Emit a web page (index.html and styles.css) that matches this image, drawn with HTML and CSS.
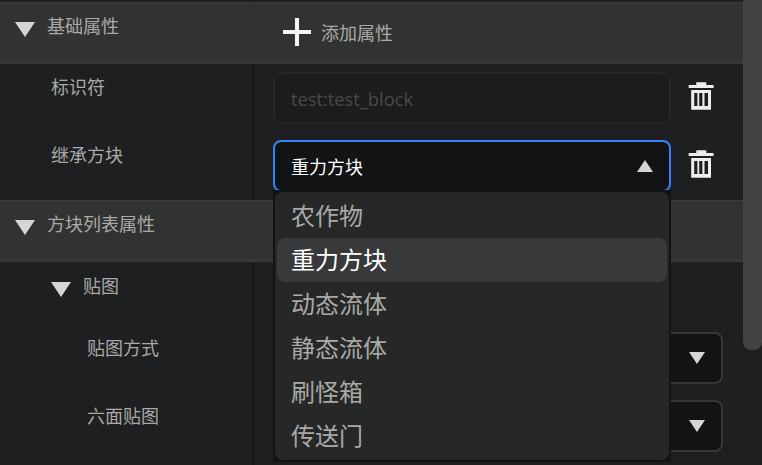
FILE: index.html
```html
<!DOCTYPE html>
<html lang="zh-CN">
<head>
<meta charset="utf-8">
<title>属性</title>
<link rel="stylesheet" href="styles.css">
</head>
<body>
<svg class="defs" aria-hidden="true">
  <symbol id="down" viewBox="0 0 20 15"><path d="M0 0h20L10 15z"/></symbol>
  <symbol id="up" viewBox="0 0 16 12"><path d="M0 12h16L8 0z"/></symbol>
  <symbol id="trash" viewBox="0 0 26 28"><path fill-rule="evenodd" d="M8.300 .3h10v2.700h7.300v3H.7V3h7.600zM3.200 8h19.800v19.700H3.200zM6.200 11v13h3.200V11zM11.200 11v13h3.200V11zM16.500 11v13h3.500V11z"/></symbol>
</svg>
<div class="window">
  <main class="panel">
    <header class="section">
      <div class="name"><svg class="arrow"><use href="#down"/></svg><span>基础属性</span></div>
      <div class="add"><svg class="plus" viewBox="0 0 28 28"><path d="M12 0h4v12h12v4H16v12h-4V16H0v-4h12z"/></svg><span>添加属性</span></div>
    </header>
    <div class="row">
      <div class="name prop">标识符</div>
      <div class="value"><div class="field disabled">test:test_block</div><svg class="trash"><use href="#trash"/></svg></div>
    </div>
    <div class="row">
      <div class="name prop">继承方块</div>
      <div class="value">
        <div class="field open"><span>重力方块</span><svg class="caret"><use href="#up"/></svg>
          <div class="menu">
            <ul class="options">
              <li>农作物</li>
              <li class="selected">重力方块</li>
              <li>动态流体</li>
              <li>静态流体</li>
              <li>刷怪箱</li>
              <li>传送门</li>
            </ul>
          </div>
        </div>
        <svg class="trash"><use href="#trash"/></svg>
      </div>
    </div>
    <header class="section">
      <div class="name"><svg class="arrow"><use href="#down"/></svg><span>方块列表属性</span></div>
    </header>
    <div class="row group">
      <div class="name"><svg class="arrow"><use href="#down"/></svg><span>贴图</span></div>
    </div>
    <div class="row">
      <div class="name nested">贴图方式</div>
      <div class="value"><div class="field wide"><svg class="caret"><use href="#down"/></svg></div></div>
    </div>
    <div class="row last">
      <div class="name nested">六面贴图</div>
      <div class="value"><div class="field wide"><svg class="caret"><use href="#down"/></svg></div></div>
    </div>
  </main>
  <aside class="scroll"><div class="thumb"></div></aside>
</div>
</body>
</html>
```
FILE: styles.css
```css
* { box-sizing: border-box; }
body {
  margin: 0;
  background: #1e1f21;
  color: #a9a9a7;
  font: 18px/24px "Noto Sans CJK SC", sans-serif;
  overflow: hidden;
}
svg { display: block; flex: none; fill: #d5d5d5; }
.defs { display: none; }
.window { display: flex; height: 465px; }
.panel {
  width: 743px;
  padding-top: 2px;
  flex: none;
  background: linear-gradient(90deg, transparent 252px, #151617 252px, #151617 254px, transparent 254px);
}
.section {
  display: flex;
  height: 62px;
  background: #313332;
  border-top: 1px solid #3a3c3b;
  border-bottom: 3px solid #373938;
  padding-top: 10px;
}
.name { width: 254px; flex: none; display: flex; }
.section .name { padding-left: 15px; }
.arrow { width: 20px; height: 15px; margin: 9px 12px 0 0; }
.add { display: flex; padding-left: 29px; gap: 10px; line-height: 38px; }
.plus { width: 28px; height: 28px; margin-top: 5px; fill: #f4f7f4; }
.row { display: flex; height: 68px; }
.row .name { padding-top: 11px; }
.group { height: 62px; }
.group .name { padding-left: 51px; }
.last { height: 73px; }
.row .prop { padding-left: 51px; padding-top: 10px; }
.row .nested { padding-left: 87px; }
.value { flex: 1; display: flex; padding: 8px 0 0 19px; }
.field {
  position: relative;
  width: 398px;
  height: 52px;
  display: flex;
  align-items: center;
  justify-content: space-between;
  padding: 0 16px;
  border: 2px solid #353638;
  border-radius: 8px;
  background: #121315;
}
.disabled {
  background: #1b1c1e;
  border-color: #252628;
  color: #48494a;
  font-family: "Open Sans", sans-serif;
  font-size: 18.3px;
  padding-top: 2px;
}
.open { border-color: #3484f7; color: #fff; }
.open > span { margin-top: -1px; }
.wide { width: 450px; justify-content: flex-end; }
.caret { width: 16px; height: 12px; }
.trash { width: 26px; height: 28px; margin: 10px 0 0 17px; fill: #eee; }
.menu {
  position: absolute;
  left: -2px;
  top: 48px;
  width: 398px;
  padding: 2px;
  background: #121315;
  z-index: 1;
}
.options {
  list-style: none;
  margin: 0;
  padding: 2px;
  border-radius: 8px;
  background: #262827;
  font-size: 24px;
  color: #a9a9a7;
}
.options li { height: 44px; line-height: 42px; padding-left: 14px; border-radius: 8px; }
.options .selected { background: #38393b; color: #fff; }
.scroll { width: 19px; }
.thumb { height: 350px; background: #424345; border-radius: 0 0 8px 8px; }
```
